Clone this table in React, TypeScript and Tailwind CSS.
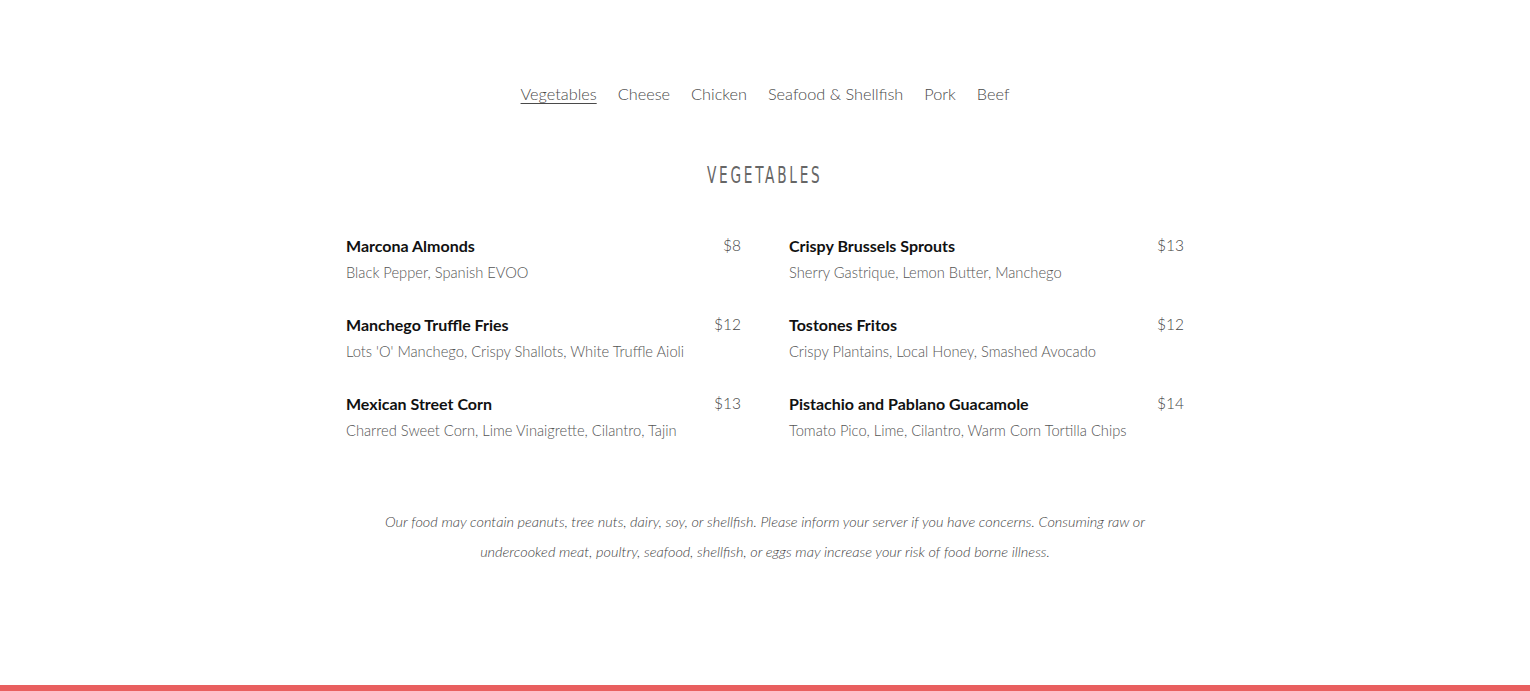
const items = [
  [
    { name: "Marcona Almonds", desc: "Black Pepper, Spanish EVOO", price: "$8" },
    { name: "Manchego Truffle Fries", desc: "Lots 'O' Manchego, Crispy Shallots, White Truffle Aioli", price: "$12" },
    { name: "Mexican Street Corn", desc: "Charred Sweet Corn, Lime Vinaigrette, Cilantro, Tajin", price: "$13" },
  ],
  [
    { name: "Crispy Brussels Sprouts", desc: "Sherry Gastrique, Lemon Butter, Manchego", price: "$13" },
    { name: "Tostones Fritos", desc: "Crispy Plantains, Local Honey, Smashed Avocado", price: "$12" },
    { name: "Pistachio and Pablano Guacamole", desc: "Tomato Pico, Lime, Cilantro, Warm Corn Tortilla Chips", price: "$14" },
  ],
]

const tabs = ["Vegetables", "Cheese", "Chicken", "Seafood & Shellfish", "Pork", "Beef"]

const App = () => {
  return (
    <div className="flex flex-col min-h-[691px] bg-white font-['Lato',sans-serif] text-[#555]">
      <div className="flex flex-col items-center flex-1">
        <nav className="flex gap-[21px] mt-[81px] text-[16.3px] font-light leading-[26px] text-[#4a4a4a]">
          {tabs.map((t, i) => (
            <span key={t} className={i === 0 ? "underline underline-offset-[3px] decoration-1" : ""}>{t}</span>
          ))}
        </nav>
        <h2 className="mt-[54px] font-['DejaVu_Sans_Condensed',sans-serif] font-extralight text-[22px] tracking-[4px] leading-[30px] text-[#666] scale-y-105 scale-x-[0.69]">
          VEGETABLES
        </h2>
        <div className="grid grid-cols-2 gap-x-[48px] w-[838px] mt-[42px]">
          {items.map((col, ci) => (
            <div key={ci} className="flex flex-col gap-[27px]">
              {col.map((it) => (
                <div key={it.name} className="flex justify-between">
                  <div className="flex flex-col">
                    <span className="text-[16px] font-bold text-[#111] leading-[26px]">{it.name}</span>
                    <span className="text-[14.7px] font-light leading-[26px]">{it.desc}</span>
                  </div>
                  <span className="text-[15.5px] font-light leading-[24px] text-[#444]">{it.price}</span>
                </div>
              ))}
            </div>
          ))}
        </div>
        <p className="mt-[64px] w-[800px] text-center italic font-light text-[14.5px] leading-[30px] text-[#444]">
          Our food may contain peanuts, tree nuts, dairy, soy, or shellfish. Please inform your server if you have concerns. Consuming raw or undercooked meat, poultry, seafood, shellfish, or eggs may increase your risk of food borne illness.
        </p>
      </div>
      <div className="h-[6px] bg-[#e95f5f]" />
    </div>
  )
}

export default App
